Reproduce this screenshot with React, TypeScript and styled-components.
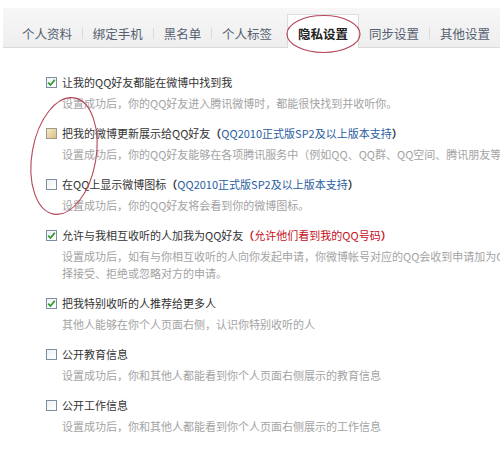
import React from "react";
import styled, { createGlobalStyle } from "styled-components";

const GlobalStyle = createGlobalStyle`
  html, body { margin: 0; padding: 0; background: #fff; }
  body {
    font-family: "Noto Sans CJK SC", "Noto Sans", sans-serif;
    overflow: hidden;
  }
`;

const Page = styled.div`
  position: relative;
  width: 500px;
  height: 453px;
  overflow: hidden;
  background: #fff;
`;

const TabBar = styled.div`
  display: flex;
  align-items: stretch;
  height: 39px;
  margin: 8px 0 0 3px;
  padding-left: 9px;
  background: linear-gradient(#f7f7f7, #eeeeee);
  border-bottom: 1px solid #dadada;
  white-space: nowrap;
`;

const Tab = styled.div<{ $active?: boolean }>`
  display: flex;
  align-items: center;
  padding: ${(p) => (p.$active ? "5px 10px 0" : "13px 10px 0")};
  margin: ${(p) => (p.$active ? "6px 0 -1px 5px" : "0")};
  font-size: 12.5px;
  line-height: 14px;
  color: ${(p) => (p.$active ? "#222" : "#556070")};
  font-weight: ${(p) => (p.$active ? 700 : 400)};
  background: ${(p) => (p.$active ? "#fff" : "transparent")};
  border: ${(p) => (p.$active ? "1px solid #dcdcdc" : "none")};
  border-bottom: none;
`;

const Sep = styled.span`
  align-self: flex-end;
  width: 1px;
  height: 11px;
  margin-bottom: 8px;
  background: #dadada;
`;

const List = styled.div`
  padding: 24px 0 0 46px;
  width: 700px;
`;

const Item = styled.div`
  margin-bottom: 11px;
`;

const TitleRow = styled.div`
  display: flex;
  align-items: center;
  gap: 5px;
  height: 20px;
  font-size: 11px;
  line-height: 20px;
  color: #333;
  white-space: nowrap;
`;

const Box = styled.span<{ $variant: "checked" | "hover" | "empty" }>`
  position: relative;
  box-sizing: border-box;
  width: 11px;
  height: 11px;
  flex: none;
  border: 1px solid
    ${(p) => (p.$variant === "hover" ? "#a09a88" : "#7d8ea3")};
  background: ${(p) =>
    p.$variant === "hover"
      ? "linear-gradient(135deg, #f7ecc6, #d9bf85)"
      : "linear-gradient(135deg, #eef1f4, #ffffff)"};
  display: flex;
  align-items: center;
  justify-content: center;
`;

const Link = styled.span`
  color: #2a5d9f;
`;

const Paren = styled.span<{ $red?: boolean }>`
  color: ${(p) => (p.$red ? "#c4101c" : "#333")};
  font-weight: 700;
`;

const Red = styled.span`
  color: #c4101c;
`;

const Desc = styled.div`
  margin-top: 3px;
  padding-left: 16px;
  font-size: 11px;
  line-height: 17px;
  color: #a3a3a3;
  white-space: nowrap;
`;

const Line = styled.span`
  display: block;
`;

const Overlay = styled.svg`
  position: absolute;
  left: 0;
  top: 0;
  pointer-events: none;
`;

type V = "checked" | "hover" | "empty";

const Check: React.FC<{ v: V }> = ({ v }) => (
  <Box $variant={v}>
    {v === "checked" && (
      <svg width="9" height="9" viewBox="0 0 9 9">
        <path d="M1.2 4.6 L3.5 7 L7.8 1.8" fill="none" stroke="#2f9a2f" strokeWidth="1.8" />
      </svg>
    )}
  </Box>
);

const tabs = ["个人资料", "绑定手机", "黑名单", "个人标签"];

export default function App() {
  return (
    <Page>
      <GlobalStyle />
      <TabBar>
        {tabs.map((t, i) => (
          <React.Fragment key={t}>
            {i > 0 && <Sep />}
            <Tab>{t}</Tab>
          </React.Fragment>
        ))}
        <Tab $active>隐私设置</Tab>
        <Tab>同步设置</Tab>
        <Sep />
        <Tab>其他设置</Tab>
      </TabBar>
      <List>
        <Item>
          <TitleRow>
            <Check v="checked" />
            让我的QQ好友都能在微博中找到我
          </TitleRow>
          <Desc>设置成功后，你的QQ好友进入腾讯微博时，都能很快找到并收听你。</Desc>
        </Item>
        <Item>
          <TitleRow>
            <Check v="hover" />
            <span>
              把我的微博更新展示给QQ好友<Paren>（</Paren>
              <Link>QQ2010正式版SP2及以上版本支持</Link>
              <Paren>）</Paren>
            </span>
          </TitleRow>
          <Desc>设置成功后，你的QQ好友能够在各项腾讯服务中（例如QQ、QQ群、QQ空间、腾讯朋友等</Desc>
        </Item>
        <Item>
          <TitleRow>
            <Check v="empty" />
            <span>
              在QQ上显示微博图标<Paren>（</Paren>
              <Link>QQ2010正式版SP2及以上版本支持</Link>
              <Paren>）</Paren>
            </span>
          </TitleRow>
          <Desc>设置成功后，你的QQ好友将会看到你的微博图标。</Desc>
        </Item>
        <Item>
          <TitleRow>
            <Check v="checked" />
            <span>
              允许与我相互收听的人加我为QQ好友<Paren $red>（</Paren>
              <Red>允许他们看到我的QQ号码</Red>
              <Paren $red>）</Paren>
            </span>
          </TitleRow>
          <Desc>
            <Line>设置成功后，如有与你相互收听的人向你发起申请，你微博帐号对应的QQ会收到申请加为QQ好友请求，你可以选</Line>
            <Line>择接受、拒绝或忽略对方的申请。</Line>
          </Desc>
        </Item>
        <Item>
          <TitleRow>
            <Check v="checked" />
            把我特别收听的人推荐给更多人
          </TitleRow>
          <Desc>其他人能够在你个人页面右侧，认识你特别收听的人</Desc>
        </Item>
        <Item>
          <TitleRow>
            <Check v="empty" />
            公开教育信息
          </TitleRow>
          <Desc>设置成功后，你和其他人都能看到你个人页面右侧展示的教育信息</Desc>
        </Item>
        <Item>
          <TitleRow>
            <Check v="empty" />
            公开工作信息
          </TitleRow>
          <Desc>设置成功后，你和其他人都能看到你个人页面右侧展示的工作信息</Desc>
        </Item>
      </List>
      <Overlay width="500" height="453" viewBox="0 0 500 453">
        <ellipse cx="323.5" cy="34" rx="36.5" ry="18.5" fill="none" stroke="#b5475a" strokeWidth="1.2" />
        <ellipse
          cx="64"
          cy="156"
          rx="32"
          ry="59"
          fill="none"
          stroke="#b5475a"
          strokeWidth="1.1"
          transform="rotate(10 64 156)"
        />
      </Overlay>
    </Page>
  );
}
